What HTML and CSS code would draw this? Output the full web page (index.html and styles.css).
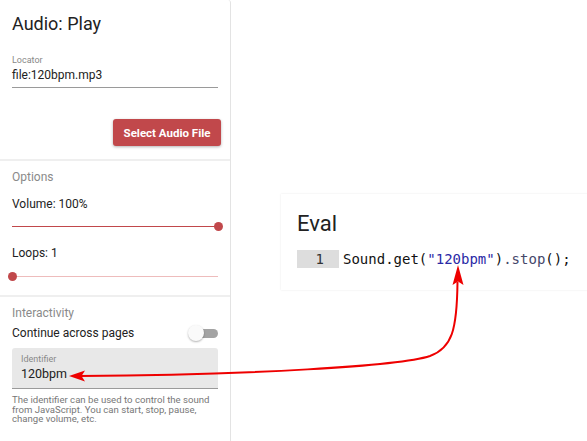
FILE: index.html
```html
<!DOCTYPE html>
<html>
<head>
<meta charset="utf-8">
<link rel="stylesheet" href="styles.css">
</head>
<body>
<div class="page">
  <aside class="sidebar">
    <section class="sec sec-first">
      <h1 class="title">Audio: Play</h1>
      <div class="field">
        <div class="label">Locator</div>
        <div class="value">file:120bpm.mp3</div>
      </div>
      <div class="btn-row"><button class="btn">Select Audio File</button></div>
    </section>
    <section class="sec sec-opts">
      <div class="heading">Options</div>
      <div class="text vol">Volume: 100%</div>
      <div class="slider s1"><div class="track dark"></div><div class="thumb at-end"></div></div>
      <div class="text loops">Loops: 1</div>
      <div class="slider s2"><div class="track light"></div><div class="thumb at-start"></div></div>
    </section>
    <section class="sec sec-inter">
      <div class="heading">Interactivity</div>
      <div class="row">
        <div class="text">Continue across pages</div>
        <div class="toggle"><div class="toggle-track"></div><div class="toggle-knob"></div></div>
      </div>
      <div class="filled">
        <div class="label">Identifier</div>
        <div class="value2">120bpm</div>
      </div>
      <p class="help">The identifier can be used to control the sound from JavaScript. You can start, stop, pause, change volume, etc.</p>
    </section>
  </aside>
  <main class="main">
    <div class="card">
      <h2 class="eval-title">Eval</h2>
      <div class="code-line">
        <span class="gutter">1</span>
        <code class="code">Sound.get(<span class="str">"120bpm"</span>)<span class="prop">.stop</span>();</code>
      </div>
    </div>
  </main>
  <svg class="arrow" width="587" height="441" viewBox="0 0 587 441">
    <path d="M 80 376 C 250 375, 400 366, 430 356 C 452 348, 457 330, 457.5 282" fill="none" stroke="#ee0000" stroke-width="2"/>
    <polygon points="69,376 85,370.5 81.5,376 85,381.5" fill="#ee0000"/>
    <polygon points="458,265 452.5,285 458,281.5 463.5,285" fill="#ee0000"/>
  </svg>
</div>
</body>
</html>
```
FILE: styles.css
```css
html, body {
  margin: 0;
  padding: 0;
  background: #fff;
}
body {
  font-family: Roboto, "Liberation Sans", sans-serif;
  color: #222;
}
.page {
  position: relative;
  display: flex;
  width: 587px;
  height: 441px;
  overflow: hidden;
}
.sidebar {
  width: 230px;
  flex: none;
  height: 441px;
  border-right: 1px solid #e3e3e3;
  border-top-right-radius: 3px;
  display: flex;
  flex-direction: column;
}
.sec {
  padding: 0 12px;
  display: flex;
  flex-direction: column;
}
.sec-first {
  padding-top: 12px;
  padding-bottom: 13px;
  border-bottom: 2px solid #efefef;
}
.title {
  margin: 0;
  font-size: 18px;
  line-height: 24px;
  font-weight: 400;
  color: #222;
}
.field {
  margin-top: 19px;
  border-bottom: 1px solid #9a9a9a;
}
.label {
  font-size: 9px;
  line-height: 11px;
  color: #888;
}
.value {
  font-size: 12px;
  line-height: 18px;
  padding-bottom: 3px;
  color: #222;
}
.btn-row {
  display: flex;
  justify-content: flex-end;
  margin-top: 31px;
  margin-right: -3px;
}
.btn {
  width: 108px;
  height: 27px;
  border: none;
  border-radius: 3px;
  background: #c1484b;
  color: #fff;
  font-family: Roboto, "Liberation Sans", sans-serif;
  font-size: 11.5px;
  font-weight: 700;
  padding: 0;
  box-shadow: 0 1px 3px rgba(0,0,0,0.3);
}
.sec-opts {
  padding-top: 7px;
  padding-bottom: 12px;
  border-bottom: 2px solid #efefef;
}
.heading {
  font-size: 12px;
  line-height: 18px;
  color: #8a8a8a;
}
.text {
  font-size: 12px;
  line-height: 18px;
  color: #222;
}
.vol {
  margin-top: 9px;
}
.loops {
  margin-top: 11px;
}
.slider {
  position: relative;
  height: 14px;
  display: flex;
  align-items: center;
}
.s1 {
  margin-top: 6px;
}
.s2 {
  margin-top: 7px;
}
.track {
  width: 100%;
  height: 1px;
}
.track.dark {
  background: #c1484b;
}
.track.light {
  background: #eebcbc;
}
.thumb {
  position: absolute;
  top: 2.5px;
  width: 9px;
  height: 9px;
  border-radius: 50%;
  background: #c1484b;
}
.thumb.at-end {
  right: -4.5px;
}
.thumb.at-start {
  left: -4.5px;
}
.sec-inter {
  padding-top: 7px;
}
.row {
  margin-top: 2px;
  display: flex;
  justify-content: space-between;
  align-items: center;
}
.toggle {
  position: relative;
  width: 29px;
  height: 16px;
  display: flex;
  align-items: center;
  justify-content: flex-end;
}
.toggle-track {
  width: 27px;
  height: 9px;
  border-radius: 5px;
  background: #a3a3a3;
}
.toggle-knob {
  position: absolute;
  left: -1px;
  top: 0;
  width: 16px;
  height: 16px;
  border-radius: 50%;
  background: #fafafa;
  box-shadow: 0 1px 2px rgba(0,0,0,0.3);
}
.filled {
  margin-top: 6px;
  background: #e8e8e8;
  border-radius: 3px 3px 0 0;
  border-bottom: 1px solid #9a9a9a;
  padding: 6px 9px 5px;
}
.value2 {
  font-size: 12.5px;
  line-height: 18px;
  color: #222;
}
.help {
  margin: 6px 0 0;
  font-size: 9.6px;
  line-height: 9.5px;
  color: #777;
}
.main {
  flex: 1;
  padding-top: 194px;
  padding-left: 50px;
  overflow: hidden;
}
.card {
  width: 340px;
  box-sizing: border-box;
  padding: 17px 16px 22px;
  background: #fff;
  box-shadow: 0 0 2px rgba(0,0,0,0.09);
}
.eval-title {
  margin: 0;
  font-size: 22px;
  line-height: 26px;
  font-weight: 400;
  color: #222;
}
.code-line {
  margin-top: 13px;
  display: flex;
  align-items: center;
  height: 18px;
}
.gutter {
  width: 42px;
  height: 18px;
  box-sizing: border-box;
  background: #dddddd;
  text-align: right;
  padding-right: 15px;
  font-family: "DejaVu Sans Mono", monospace;
  font-size: 14px;
  line-height: 18px;
  color: #333;
}
.code {
  margin-left: 4px;
  font-family: "DejaVu Sans Mono", monospace;
  font-size: 14px;
  line-height: 18px;
  color: #111;
  white-space: pre;
}
.str {
  color: #2a2aa6;
}
.prop {
  color: #45476a;
}
.arrow {
  position: absolute;
  left: 0;
  top: 0;
  pointer-events: none;
}
```
